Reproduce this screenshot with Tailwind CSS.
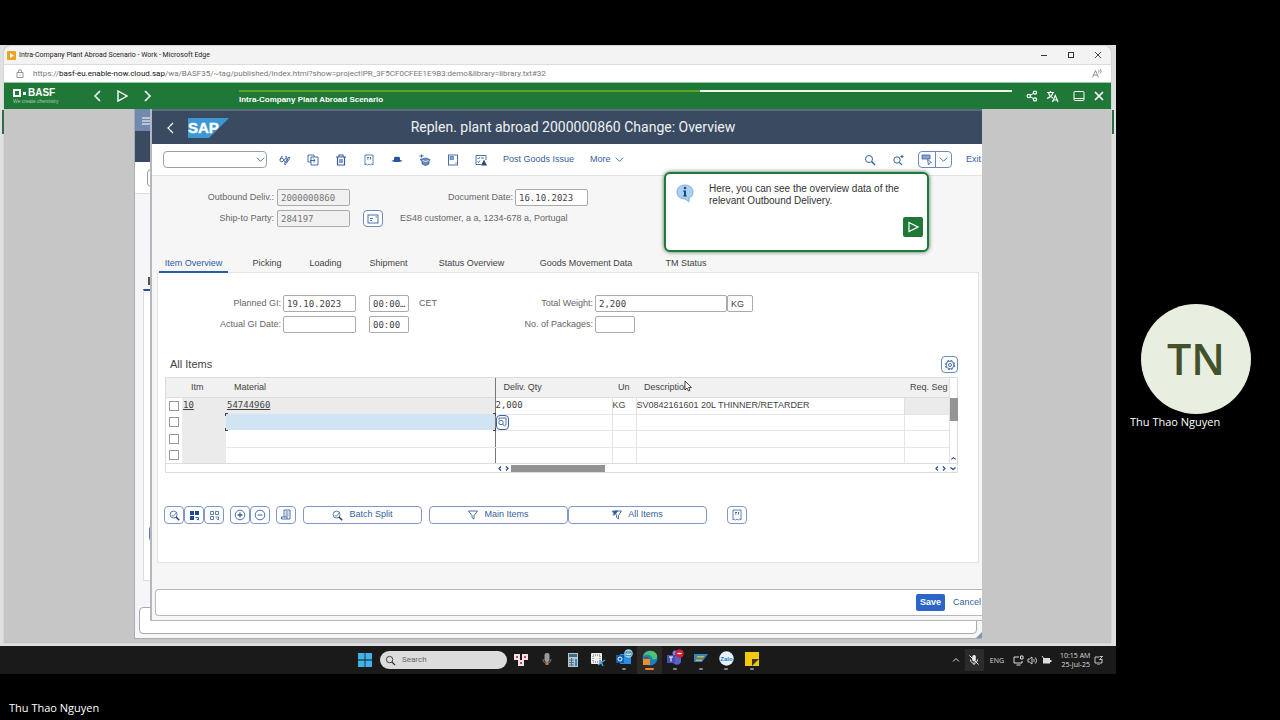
<!DOCTYPE html>
<html lang="en">
<head>
<meta charset="utf-8">
<meta name="viewport" content="width=device-width, initial-scale=1">
<title>Intra-Company Plant Abroad Scenario</title>
<script src="https://cdn.jsdelivr.net/npm/@tailwindcss/browser@4"></script>
</head>
<body class="flex min-h-screen flex-col bg-black font-['Open_Sans','Noto_Sans',sans-serif]">

<svg class="hidden" aria-hidden="true">
  <symbol id="chev-down" viewBox="0 0 10 10"><path d="M1 3l4 4 4-4" fill="none" stroke="currentColor" stroke-width="1"/></symbol>
  <symbol id="zoom" viewBox="0 0 12 12"><circle cx="5" cy="5" r="3.500" fill="none" stroke="currentColor"/><path d="M7.600 7.600l3.400 3.400" stroke="currentColor" stroke-width="1.400"/></symbol>
  <symbol id="zoom-check" viewBox="0 0 12 12"><circle cx="5" cy="5" r="3.800" fill="none" stroke="currentColor" stroke-width=".9"/><path d="M3 5.500L4.500 7 8 3" fill="none" stroke="currentColor" stroke-width=".9"/><path d="M7.600 7.600l3.600 3.600" stroke="#223a66" stroke-width="1.600"/></symbol>
  <symbol id="note" viewBox="0 0 12 12"><path d="M2 1h8v10l-1.300-1-1.300 1-1.400-1-1.400 1-1.300-1L2 11z" fill="none" stroke="currentColor" stroke-width=".8"/><path d="M4 3.500h2M4 5h1.500M7.500 3v2.500" stroke="currentColor" stroke-width=".9"/></symbol>
</svg>

<div class="flex flex-1 pt-[45px]">
  <main class="flex min-w-0 flex-1 flex-col">

    <!-- Desktop with browser window -->
    <div class="flex bg-[#dfe1e0] pt-px pb-[3px]">
      <div class="w-1 shrink-0 pt-[64px]"><div class="ml-[2px] h-6 bg-[#2b6b3d]"></div></div>
      <section class="min-w-0 flex-1 overflow-hidden rounded-t-md bg-[#c6c6c6] shadow-[0_0_1px_#777]">
        <header class="flex h-[18px] items-center bg-[#f3f3f3] pr-[9px] pl-[3px]">
          <svg class="size-[9px]" viewBox="0 0 9 9"><rect width="9" height="9" rx="1" fill="#eda422"/><path d="M3 2l4 2.500-4 2.500z" fill="#fff"/></svg>
          <h1 class="ml-[3px] flex-1 font-[Roboto,sans-serif] text-[7px] text-[#222]">Intra-Company Plant Abroad Scenario - Work - Microsoft Edge</h1>
          <div class="flex gap-[19px] text-[#333]">
            <button aria-label="Minimize"><svg class="size-2" viewBox="0 0 8 8"><path d="M1 4.500h6" stroke="currentColor"/></svg></button>
            <button aria-label="Maximize"><svg class="size-2" viewBox="0 0 8 8"><rect x="1.500" y="1.500" width="5" height="5" fill="none" stroke="currentColor"/></svg></button>
            <button aria-label="Close window"><svg class="size-2" viewBox="0 0 8 8"><path d="M1 1l6 6M7 1L1 7" stroke="currentColor" stroke-width=".9"/></svg></button>
          </div>
        </header>
        <div class="flex h-[18px] items-center border-t border-[#dcdcdc] bg-white pr-[9px] pl-3 font-[Roboto,sans-serif] text-[8px] text-[#777]">
          <svg class="h-[9px] w-2" viewBox="0 0 8 9"><path d="M1 3.500h6v5H1zM2.500 3.500V2.200a1.500 1.500 0 013 0v1.300M4 5.500v1" fill="none" stroke="#888" stroke-width=".9"/></svg>
          <span class="ml-[9px] flex-1">https://<span class="text-[#111]">basf-eu.enable-now.cloud.sap</span>/wa/BASF35/~tag/published/index.html?show=project!PR_3F5CF0CFEE1E9B3:demo&amp;library=library.txt#32</span>
          <button aria-label="Read aloud"><svg class="h-[9px] w-[10px]" viewBox="0 0 10 9"><path d="M.500 8.500L3.500 1.500l3 7M1.500 6h4M6.500 1c.8.6.8 1.600 0 2.500M8 0c1.400 1.200 1.400 3 0 4.500" fill="none" stroke="#777" stroke-width=".8"/></svg></button>
        </div>

        <!-- Player bar -->
        <div class="flex h-[27px] border-t border-[#9cc7a6] bg-[#1f7838] pl-[9px] text-white">
          <div class="w-[43px] pt-[5px]">
            <div class="flex items-center gap-[2px] font-['Liberation_Sans',sans-serif] text-[10px] leading-[10px] font-bold">
              <span class="size-2 border-2 border-white"></span><span class="size-[3px] bg-white"></span><span>BASF</span>
            </div>
            <p class="font-['Liberation_Sans',sans-serif] text-[5px] leading-[7px] whitespace-nowrap text-[#a5cfb0]">We create chemistry</p>
          </div>
          <div class="flex w-[183px] items-center gap-[13px] pl-[35px]">
            <button aria-label="Previous"><svg class="h-3.5 w-3" viewBox="0 0 12 14"><path d="M9 2L4 7l5 5" fill="none" stroke="currentColor" stroke-width="1.600"/></svg></button>
            <button aria-label="Play"><svg class="h-3.5 w-3" viewBox="0 0 12 14"><path d="M2 2l9 5-9 5z" fill="none" stroke="currentColor" stroke-width="1.400"/></svg></button>
            <button aria-label="Next"><svg class="h-3.5 w-3" viewBox="0 0 12 14"><path d="M4 2l5 5-5 5" fill="none" stroke="currentColor" stroke-width="1.600"/></svg></button>
          </div>
          <div class="min-w-0 flex-1 pt-[7px]">
            <div class="flex h-[2px] bg-[#eef6ee]"><div class="bg-[#5aa522]" style="width:59.600%"></div></div>
            <h2 class="font-['Liberation_Sans',sans-serif] text-[8px] leading-4 font-bold">Intra-Company Plant Abroad Scenario</h2>
          </div>
          <div class="flex items-center pr-[7px] pl-[14px]">
            <button aria-label="Share"><svg class="size-3" viewBox="0 0 12 12"><path d="M3 6l6-3.500M3 6l6 3.500" stroke="currentColor"/><g fill="#1f7838" stroke="currentColor" stroke-width="1.200"><circle cx="2.800" cy="6" r="1.700"/><circle cx="9" cy="2.600" r="1.600"/><circle cx="9" cy="9.400" r="1.600"/></g></svg></button>
            <button aria-label="Language" class="ml-2"><svg class="size-[13px]" viewBox="0 0 13 13"><path d="M1 2.500h7M4.500 1v1.500M2.500 3C3 5.500 5 7 7 8M6.800 3C6 6 3.500 7.500 1 8.500M6.500 12L9.200 5.500 12 12M7.500 10h3.500" fill="none" stroke="currentColor" stroke-width="1.200"/></svg></button>
            <button aria-label="Layout" class="ml-[14px]"><svg class="size-3" viewBox="0 0 12 12"><rect x="1" y="1.500" width="10" height="9" rx="1" fill="none" stroke="currentColor"/><path d="M1 8.500h10" stroke="currentColor"/></svg></button>
            <button aria-label="Close" class="ml-[9px]"><svg class="size-[10px]" viewBox="0 0 10 10"><path d="M1 1l8 8M9 1L1 9" stroke="currentColor" stroke-width="1.700"/></svg></button>
          </div>
        </div>

        <!-- Demo stage -->
        <div class="mr-[129px] ml-[130px] pb-[4px]">
          <div class="relative h-[530px] overflow-hidden border-b border-l border-[#a9adb2] bg-[#f5f6f7]">
            <!-- Window behind -->
            <div class="flex h-full flex-col">
              <div class="h-[22px] bg-[#7189af] pt-2 pl-[7px]"><svg class="h-2 w-[9px]" viewBox="0 0 9 8"><path d="M0 1h9M0 4h9M0 7h9" stroke="#fff"/></svg></div>
              <div class="h-[31px] bg-[#3a4a60]"></div>
              <div class="h-[32px] border-b border-[#ddd] bg-white pt-[7px] pl-3"><div class="h-[18px] rounded-sm border border-[#999]"></div></div>
              <div class="mt-[83px] mb-1 ml-[13px] h-2 w-[2px] bg-[#555]"></div>
              <div class="ml-2 flex-1 border border-t-2 border-[#ddd] border-t-[#2a5699] bg-white pt-[234px] pl-[5px]"><div class="h-[17px] rounded-sm border border-[#5b7db5]"></div></div>
              <div class="mt-[26px] mr-[5px] mb-1 ml-1 h-[27px] rounded-sm border border-[#a5a9b0] bg-white"></div>
            </div>
            <svg class="absolute right-0 bottom-0 size-1.5" viewBox="0 0 6 6"><path d="M6 0v6H0z" fill="#7f93b5"/></svg>

            <!-- Front window -->
            <div class="absolute top-0 right-0 bottom-[17px] left-[15px] flex flex-col overflow-hidden border-b border-l-2 border-[#b4b8bd] bg-[#f6f6f6] font-['Liberation_Sans',sans-serif] text-[9px] text-[#666]">
              <div class="flex h-[35px] shrink-0 items-center border-t-2 border-[#5a6c80] bg-[#3a4a60] pl-[14px] text-white">
                <button aria-label="Back"><svg class="h-3 w-2" viewBox="0 0 8 12"><path d="M7 1L2 6l5 5" fill="none" stroke="currentColor" stroke-width="1.200"/></svg></button>
                <svg class="ml-[14px] h-5 w-[41px]" viewBox="0 0 41 20"><path d="M0 0h41L21 20H0z" fill="#3c97d3"/><text x="0" y="15" font-family="Liberation Sans" font-weight="700" font-size="15" fill="#fff" stroke="#fff" stroke-width=".4">SAP</text></svg>
                <h2 class="mr-[65px] flex-1 text-center font-[Roboto,sans-serif] text-[14px] whitespace-nowrap text-[#eef1f5]">Replen. plant abroad 2000000860 Change: Overview</h2>
              </div>

              <div class="flex h-[32px] shrink-0 items-center border-b border-[#e2e2e2] bg-white pl-[11px] text-[#35609f]">
                <div class="relative">
                  <select aria-label="Command" class="block h-[17px] w-[104px] appearance-none rounded-sm border border-[#9aa0a8] bg-white"><option></option></select>
                  <svg class="pointer-events-none absolute top-[4px] right-[2px] size-[9px]"><use href="#chev-down"/></svg>
                </div>
                <div class="ml-3 flex gap-4">
                  <button aria-label="Display or change"><svg class="size-3" viewBox="0 0 12 12"><g fill="none" stroke="currentColor" stroke-width=".9"><circle cx="2.800" cy="6" r="1.800"/><circle cx="7" cy="6.500" r="1.800"/><path d="M1 5.500L2.500 2.500l1.500.5M6 3l1.500-.5.500 2.500M6 11l5-7-1-1-4.500 6.500z"/></g></svg></button>
                  <button aria-label="Other delivery"><svg class="size-3" viewBox="0 0 12 12"><path d="M4 8H1V1h6v2M4 3h7v8H4zM3 6.500h5M6.300 4.700L8.200 6.500 6.300 8.300" fill="none" stroke="currentColor" stroke-width=".9"/></svg></button>
                  <button aria-label="Delete"><svg class="size-3" viewBox="0 0 12 12"><path d="M1 3h10M4 3V1h4v2M2.500 3v8h7V3M5 5v4M7 5v4" fill="none" stroke="currentColor" stroke-width="1.200"/></svg></button>
                  <button aria-label="Output"><svg class="size-3"><use href="#note"/></svg></button>
                  <button aria-label="Header details"><svg class="size-3" viewBox="0 0 12 12"><path d="M3 6V4.500C3 2.500 4.500 2.500 6 3c1.500-.5 3-.5 3 1.500V6l2.500.8C10 8.500 2 8.500.5 6.800z" fill="#2456a0"/></svg></button>
                  <button aria-label="Pack"><svg class="size-3" viewBox="0 0 12 12"><path d="M1 5.500L6.500 4 11 5.500 10 7v3l-3.500 1.500L3 10V7z" fill="#6a8cc0" stroke="currentColor" stroke-width=".8"/><path d="M3.500 6.500l3 1 3-1" fill="none" stroke="#fff" stroke-width=".8"/><path d="M.500 2h4M2.500.5v3" stroke="currentColor"/></svg></button>
                  <button aria-label="Document"><svg class="size-3" viewBox="0 0 12 12"><rect x="1.500" y="1" width="9" height="10" fill="none" stroke="currentColor" stroke-width=".9"/><path d="M3 2.500h3.500v3H3zM8 9h2" fill="#8aa5cd" stroke="currentColor" stroke-width=".6"/></svg></button>
                  <button aria-label="Incompletion log"><svg class="size-3" viewBox="0 0 12 12"><path d="M6 10.500H1V1.500h10V6M2.500 4l1 1 1.500-2M6 4h3M2.500 7.500l1 1 1.500-2" fill="none" stroke="currentColor" stroke-width=".9"/><path d="M9 5.500L12 11.500H6z" fill="#2b4a80"/></svg></button>
                </div>
                <button class="ml-4">Post Goods Issue</button>
                <button class="ml-4 flex items-center gap-[4px]">More <svg class="size-[9px]"><use href="#chev-down"/></svg></button>
                <div class="ml-auto flex items-center">
                  <button aria-label="Search"><svg class="size-3"><use href="#zoom"/></svg></button>
                  <button aria-label="Search next" class="ml-4"><svg class="size-3" viewBox="0 0 12 12"><circle cx="5" cy="6" r="3.200" fill="none" stroke="currentColor"/><path d="M7.300 8.300l2.700 2.700M8.500 2.500h3M10 1v3" stroke="currentColor" stroke-width="1.100"/></svg></button>
                  <div class="ml-[14px] flex h-[17px] rounded-sm border border-[#6a8ac0]">
                    <button aria-label="Layout menu" class="flex w-[17px] items-center justify-center border-r border-[#6a8ac0]"><svg class="size-3" viewBox="0 0 12 12"><path d="M1 1h8v4H1z" fill="#8aa5d5" stroke="currentColor" stroke-width=".8"/><path d="M6.500 5.500l4 3-2 .5-1 2z" fill="#fff" stroke="currentColor" stroke-width=".8"/></svg></button>
                    <button aria-label="Open layout menu" class="flex w-[15px] items-center justify-center"><svg class="size-[9px]"><use href="#chev-down"/></svg></button>
                  </div>
                  <button class="ml-[14px] w-4 text-left">Exit</button>
                </div>
              </div>

              <!-- Header fields -->
              <div class="flex h-[81px] shrink-0 flex-col gap-1 pt-[13px]">
                <div class="flex items-center">
                  <label for="outb" class="w-[122px] text-right">Outbound Deliv.:</label>
                  <input id="outb" readonly value="2000000860" class="ml-[3px] h-[17px] w-[73px] rounded-xs border border-[#aaa] bg-[#f1f1f1] px-[3px] font-['DejaVu_Sans_Mono',monospace] text-[9px] text-[#777]">
                  <label for="docd" class="ml-[90px] w-[73px] text-right">Document Date:</label>
                  <input id="docd" value="16.10.2023" class="ml-[2px] h-[17px] w-[73px] rounded-xs border border-[#aaa] bg-white px-[3px] font-['DejaVu_Sans_Mono',monospace] text-[9px] text-[#444]">
                </div>
                <div class="flex items-center">
                  <label for="ship" class="w-[122px] text-right">Ship-to Party:</label>
                  <input id="ship" readonly value="284197" class="ml-[3px] h-[17px] w-[73px] rounded-xs border border-[#aaa] bg-[#f1f1f1] px-[3px] font-['DejaVu_Sans_Mono',monospace] text-[9px] text-[#777]">
                  <button aria-label="Partner details" class="ml-[13px] flex h-[17px] w-5 items-center justify-center rounded-sm border border-[#6a8ac0] bg-white text-[#35609f]"><svg class="h-2.5 w-3" viewBox="0 0 12 10"><rect x="1" y="1" width="10" height="8" fill="none" stroke="currentColor" stroke-width=".9"/><path d="M3 4.500h3M3 6.500h2M8.500 3h1.500" stroke="currentColor" stroke-width=".9"/></svg></button>
                  <span class="ml-[17px]">ES48 customer, a a, 1234-678 a, Portugal</span>
                </div>
              </div>

              <!-- Tabs -->
              <nav class="flex h-[15px] shrink-0 items-start pl-[7px] leading-[12px] text-[#444]" role="tablist">
                <button role="tab" aria-selected="true" class="relative z-10 h-4 w-[69px] border-b-2 border-[#2a5ca8] pb-[2px] whitespace-nowrap text-[#2a5ca8]">Item Overview</button>
                <button role="tab" class="ml-6 w-[30px]">Picking</button>
                <button role="tab" class="ml-[27px] w-[33px]">Loading</button>
                <button role="tab" class="ml-[27px] w-[39px]">Shipment</button>
                <button role="tab" class="ml-[30px] w-[67px] whitespace-nowrap">Status Overview</button>
                <button role="tab" class="ml-[33px] w-[96px] whitespace-nowrap">Goods Movement Data</button>
                <button role="tab" class="ml-[31px] w-[42px] whitespace-nowrap">TM Status</button>
              </nav>

              <section class="mr-[3px] ml-[5px] h-[291px] shrink-0 border border-[#e3e3e3] bg-white">
                <div class="flex flex-col gap-1 pt-[22px]">
                  <div class="flex items-center">
                    <label for="pgi" class="w-[123px] text-right">Planned GI:</label>
                    <input id="pgi" value="19.10.2023" class="ml-[2px] h-[17px] w-[73px] rounded-xs border border-[#aaa] px-[3px] font-['DejaVu_Sans_Mono',monospace] text-[9px] text-[#444]">
                    <input aria-label="Planned GI time" value="00:00…" class="ml-[13px] h-[17px] w-10 rounded-xs border border-[#aaa] pl-[3px] font-['DejaVu_Sans_Mono',monospace] text-[9px] text-[#444]">
                    <span class="ml-[10px] w-[48px]">CET</span>
                    <label for="tw" class="w-[126px] text-right">Total Weight:</label>
                    <input id="tw" value="2,200" class="ml-[2px] h-[17px] w-[132px] rounded-xs border border-[#aaa] px-[3px] font-['DejaVu_Sans_Mono',monospace] text-[9px] text-[#444]">
                    <input aria-label="Weight unit" value="KG" class="h-[17px] w-[26px] rounded-xs border border-[#aaa] px-[3px] text-[9px] text-[#444]">
                  </div>
                  <div class="flex items-center">
                    <label for="agi" class="w-[123px] text-right">Actual GI Date:</label>
                    <input id="agi" class="ml-[2px] h-[17px] w-[73px] rounded-xs border border-[#aaa]">
                    <input aria-label="Actual GI time" value="00:00" class="ml-[13px] h-[17px] w-10 rounded-xs border border-[#aaa] px-[3px] font-['DejaVu_Sans_Mono',monospace] text-[9px] text-[#444]">
                    <label for="nop" class="ml-[58px] w-[126px] text-right">No. of Packages:</label>
                    <input id="nop" class="ml-[2px] h-[17px] w-10 rounded-xs border border-[#aaa]">
                  </div>
                </div>

                <div class="mt-[23px] flex h-[17px] items-center justify-between pr-5 pl-3 text-[#444]">
                  <h3 class="text-[11px]">All Items</h3>
                  <button aria-label="Settings" class="flex size-[17px] items-center justify-center rounded-sm border border-[#6a8ac0] text-[#35609f]"><svg class="size-3" viewBox="0 0 12 12"><circle cx="6" cy="6" r="4.600" fill="none" stroke="currentColor" stroke-width="1" stroke-dasharray="2.200 1.410"/><circle cx="6" cy="6" r="3.800" fill="none" stroke="currentColor" stroke-width=".8"/><circle cx="6" cy="6" r="1.500" fill="none" stroke="currentColor" stroke-width=".9"/></svg></button>
                </div>

                <div class="mt-[4px] mr-5 ml-[7px] border border-[#dcdcdc]">
                  <div class="flex">
                    <table class="min-w-0 flex-1 table-fixed border-collapse text-left text-[#444]">
                      <colgroup><col class="w-4"><col class="w-[44px]"><col class="w-[269px]"><col class="w-[117px]"><col class="w-6"><col><col class="w-[45px]"></colgroup>
                      <thead>
                        <tr class="h-[19px] border-b border-[#dcdcdc] bg-[#f1f1f1]">
                          <th class="p-0"></th><th class="p-0 pl-[9px] font-normal">Itm</th><th class="border-r border-r-[#777] p-0 pl-2 font-normal">Material</th><th class="p-0 pl-2 font-normal">Deliv. Qty</th><th class="p-0 pl-[6px] font-normal">Un</th><th class="p-0 pl-2 font-normal">Description</th><th class="overflow-hidden p-0 pl-[6px] font-normal whitespace-nowrap">Req. Seg</th>
                        </tr>
                      </thead>
                      <tbody>
                        <tr class="h-[17px]">
                          <td class="p-0"><input type="checkbox" aria-label="Select item 10" class="mx-auto block size-[10px] appearance-none border border-[#999] bg-white"></td>
                          <td class="bg-[#ebebeb] p-0 pl-px"><a href="#" class="font-['DejaVu_Sans_Mono',monospace] text-[9px] underline">10</a></td>
                          <td class="border-r border-r-[#777] bg-[#ebebeb] p-0 pl-px"><a href="#" class="font-['DejaVu_Sans_Mono',monospace] text-[9px] underline">54744960</a></td>
                          <td class="border-r border-[#e0e0e0] p-0 font-['DejaVu_Sans_Mono',monospace] text-[9px]">2,000</td>
                          <td class="border-r border-[#e0e0e0] p-0">KG</td>
                          <td class="border-r border-[#e0e0e0] p-0 whitespace-nowrap">SV0842161601 20L THINNER/RETARDER</td>
                          <td class="bg-[#ebebeb] p-0"></td>
                        </tr>
                        <tr class="h-[16px]">
                          <td class="p-0"><input type="checkbox" aria-label="Select row 2" class="mx-auto block size-[10px] appearance-none border border-[#999] bg-white"></td>
                          <td class="bg-[#ebebeb] p-0"></td>
                          <td class="relative border-r border-r-[#777] bg-[#d1e4f4] p-0">
                            <span class="absolute -top-px -left-px size-[3px] border-t border-l border-[#444]"></span><span class="absolute -bottom-px -left-px size-[3px] border-b border-l border-[#444]"></span><span class="absolute -top-px -right-px size-[3px] border-t border-r border-[#444]"></span><span class="absolute -right-px -bottom-px size-[3px] border-r border-b border-[#444]"></span>
                          </td>
                          <td class="border border-l-0 border-[#e6e6e6] p-0"><button aria-label="Value help" class="flex h-[15px] w-[13px] items-center justify-center rounded-sm border border-[#35609f] bg-white text-[#35609f]"><svg class="size-2.5" viewBox="0 0 10 10"><path d="M2 3V1h7v7H8" fill="none" stroke="currentColor" stroke-width=".9"/><circle cx="4" cy="5.500" r="2.200" fill="none" stroke="currentColor" stroke-width=".9"/><path d="M5.500 7l2.500 2.500" stroke="currentColor"/></svg></button></td>
                          <td class="border border-[#e6e6e6] p-0"></td><td class="border border-[#e6e6e6] p-0"></td><td class="border-y border-[#e6e6e6] p-0"></td>
                        </tr>
                        <tr class="h-[17px]">
                          <td class="p-0"><input type="checkbox" aria-label="Select row 3" class="mx-auto block size-[10px] appearance-none border border-[#999] bg-white"></td>
                          <td class="bg-[#ebebeb] p-0"></td><td class="border-r border-b border-[#e6e6e6] border-r-[#777] p-0"></td>
                          <td class="border-r border-b border-[#e6e6e6] p-0"></td><td class="border border-[#e6e6e6] p-0"></td><td class="border border-[#e6e6e6] p-0"></td><td class="border-b border-[#e6e6e6] p-0"></td>
                        </tr>
                        <tr class="h-[16px]">
                          <td class="p-0"><input type="checkbox" aria-label="Select row 4" class="mx-auto block size-[10px] appearance-none border border-[#999] bg-white"></td>
                          <td class="bg-[#ebebeb] p-0"></td><td class="border-r border-r-[#777] p-0"></td>
                          <td class="border-r border-[#e6e6e6] p-0"></td><td class="border-r border-[#e6e6e6] p-0"></td><td class="border-r border-[#e6e6e6] p-0"></td><td class="p-0"></td>
                        </tr>
                      </tbody>
                    </table>
                    <div class="flex w-2 flex-col items-center border-l border-[#e0e0e0]">
                      <div class="mt-5 h-[23px] w-2 bg-[#949494]"></div>
                      <svg class="mt-auto mb-px size-[7px] text-[#1f4a93]" viewBox="0 0 8 8"><path d="M1.500 5L4 3l2.500 2" fill="none" stroke="currentColor" stroke-width="1.300"/></svg>
                    </div>
                  </div>
                  <div class="flex h-[9px] items-center border-t border-[#dcdcdc] text-[#1f4a93]">
                    <svg class="ml-[331px] h-[7px] w-[14px]" viewBox="0 0 14 7"><path d="M4 1.500L2 3.500l2 2M9 1.500l2 2-2 2" fill="none" stroke="currentColor" stroke-width="1.200"/></svg>
                    <div class="h-[7px] w-[94px] bg-[#949494]"></div>
                    <svg class="ml-auto h-[7px] w-[24px]" viewBox="0 0 24 7"><path d="M5 1.500L3 3.500l2 2M10 1.500l2 2-2 2M17.500 2.500l2.500 2 2.500-2" fill="none" stroke="currentColor" stroke-width="1.200"/></svg>
                  </div>
                </div>

                <div class="mt-[33px] ml-[6px] flex text-[#35609f]">
                  <button aria-label="Details" class="flex h-[18px] w-5 items-center justify-center rounded-sm border border-[#7f99c4]"><svg class="size-[11px]"><use href="#zoom-check"/></svg></button>
                  <button aria-label="Select all" class="flex h-[18px] w-5 items-center justify-center rounded-sm border border-[#7f99c4]"><svg class="size-[11px]" viewBox="0 0 11 11"><path d="M1 1h4v4H1zM6 1h4v4H6zM1 6h4v4H1z" fill="#1f4a93"/><path d="M6.500 7.500h3v2.500l-2-1" fill="none" stroke="currentColor"/></svg></button>
                  <button aria-label="Deselect all" class="flex h-[18px] w-5 items-center justify-center rounded-sm border border-[#7f99c4]"><svg class="size-[11px]" viewBox="0 0 11 11"><path d="M1.500 1.500h3v3h-3zM6.500 1.500h3v3h-3zM1.500 6.500h3v3h-3zM6.500 7h3v3l-2-1.500" fill="none" stroke="currentColor" stroke-width=".8"/></svg></button>
                  <button aria-label="Create item" class="ml-[6px] flex h-[18px] w-5 items-center justify-center rounded-sm border border-[#7f99c4]"><svg class="size-3" viewBox="0 0 12 12"><circle cx="6" cy="6" r="4.800" fill="none" stroke="currentColor" stroke-width=".9"/><path d="M3.500 6h5M6 3.500v5" stroke="currentColor" stroke-width="1.300"/></svg></button>
                  <button aria-label="Delete item" class="flex h-[18px] w-5 items-center justify-center rounded-sm border border-[#7f99c4]"><svg class="size-3" viewBox="0 0 12 12"><circle cx="6" cy="6" r="4.800" fill="none" stroke="currentColor" stroke-width=".9"/><path d="M3.500 6h5" stroke="currentColor"/></svg></button>
                  <button aria-label="Print" class="ml-[6px] flex h-[18px] w-5 items-center justify-center rounded-sm border border-[#7f99c4]"><svg class="size-3" viewBox="0 0 12 12"><path d="M4 8V1h6v9H1.500V8H7v2M5.500 3h3M5.500 5h3M5.500 7h3" fill="none" stroke="currentColor" stroke-width=".9"/></svg></button>
                  <button class="ml-[7px] flex h-[18px] w-[119px] items-center justify-center gap-[6px] rounded-sm border border-[#7f99c4]"><svg class="size-[11px]"><use href="#zoom-check"/></svg>Batch Split</button>
                  <button class="ml-[7px] flex h-[18px] w-[139px] items-center justify-center gap-[6px] rounded-sm border border-[#7f99c4]"><svg class="size-[10px]" viewBox="0 0 10 10"><path d="M.5 1h9L6 5.500V9L4 7.500v-2z" fill="none" stroke="currentColor" stroke-width=".9"/></svg>Main Items</button>
                  <button class="flex h-[18px] w-[139px] items-center justify-center gap-[6px] rounded-sm border border-[#7f99c4]"><svg class="size-[10px]" viewBox="0 0 10 10"><path d="M3 1h6.500L6.500 5.500V9L4.500 7.500v-2z" fill="none" stroke="currentColor" stroke-width=".9"/><path d="M.5 1h5L2.500 5zM.5 5h2" fill="currentColor" stroke="currentColor" stroke-width=".8"/></svg>All Items</button>
                  <button aria-label="Item output" class="ml-5 flex h-[18px] w-5 items-center justify-center rounded-sm border border-[#7f99c4]"><svg class="size-3"><use href="#note"/></svg></button>
                </div>
              </section>

              <div class="mt-[26px] ml-[3px] flex h-[27px] shrink-0 items-center justify-end rounded-l-sm border border-r-0 border-[#b4b8bd] bg-white">
                <button class="h-[17px] w-[29px] rounded-xs bg-[#2b65c8] font-bold text-white">Save</button>
                <button class="ml-2 w-[29px] text-left whitespace-nowrap text-[#35609f]">Cancel</button>
              </div>
            </div>

            <!-- Callout -->
            <aside class="absolute top-[63px] right-[53px] flex h-[80px] w-[265px] rounded-md border-2 border-[#1d7a3a] bg-white pt-[8px] pr-[4px] pb-[13px] pl-[10px] shadow-[0_0_4px_#4a6a50]">
              <svg class="mt-[2px] h-[19px] w-[18px] shrink-0" viewBox="0 0 18 19"><path d="M9 1c5 0 8 3 8 7 0 3-1.500 5-4 6v4l-4-3C4 15 1 12 1 8s3-7 8-7z" fill="#a9d0f0" stroke="#6fa5d5" stroke-width=".8"/><circle cx="9" cy="4" r="1.300" fill="#1b4a80"/><path d="M7 6.500h3v5h1v1H7v-1h1v-4H7z" fill="#1b4a80"/></svg>
              <p class="ml-[15px] flex-1 pt-px font-['Liberation_Sans',sans-serif] text-[10px] leading-[12px] whitespace-nowrap text-[#333]">Here, you can see the overview data of the<br>relevant Outbound Delivery.</p>
              <button aria-label="Next step" class="flex size-5 items-center justify-center self-end rounded-xs bg-[#1f7838]"><svg class="size-3" viewBox="0 0 12 12"><path d="M2 1.500l9 4.500-9 4.500z" fill="none" stroke="#fff" stroke-width="1.200"/></svg></button>
            </aside>

            <svg class="absolute top-[271px] left-[549px] h-3 w-2" viewBox="0 0 8 12"><path d="M1 1v9l2-2 1.500 3 1.500-.700L4.700 7.500H7.500z" fill="#fff" stroke="#222" stroke-width=".8"/></svg>
          </div>
        </div>
      </section>
      <div class="w-[5px] shrink-0 pt-[64px]"><div class="mr-[2px] ml-px h-6 bg-[#2b6b3d]"></div></div>
    </div>

    <!-- Taskbar -->
    <footer class="flex h-[28px] items-center bg-[#1a1a1a] pr-3 pl-[358px] text-[#ddd]">
      <button aria-label="Start"><svg class="size-[14px]" viewBox="0 0 14 14"><path d="M0 0h6.600v6.600H0zM7.400 0H14v6.600H7.400zM0 7.400h6.600V14H0zM7.400 7.400H14V14H7.400z" fill="#3fb4ea"/></svg></button>
      <label class="ml-2 flex h-[18px] w-[127px] items-center gap-[6px] rounded-full bg-[#dcdcdc] pl-[5px]">
        <svg class="size-[11px] text-[#333]"><use href="#zoom"/></svg>
        <input aria-label="Search" placeholder="Search" class="w-20 bg-transparent font-[Roboto,sans-serif] text-[8px] placeholder:text-[#666]">
      </label>
      <div class="ml-px flex items-center">
        <button aria-label="Widgets" class="flex h-7 w-[26px] items-center justify-center"><svg class="size-4" viewBox="0 0 16 16"><path d="M1 2h6v6H1zM9 2h6v6H9zM5 8h6v6H5z" fill="#f1dfe4"/><path d="M3 4h2v2H3zM11 4h2v2h-2zM7 10h2v2H7z" fill="#c2476b"/></svg></button>
        <button aria-label="Recorder" class="flex h-7 w-[26px] items-center justify-center"><svg class="size-4" viewBox="0 0 16 16"><rect x="5.500" y="1" width="5" height="9" rx="2" fill="#999"/><path d="M4 7c0 6 8 6 8 0" fill="none" stroke="#777"/><path d="M6.500 10h3v3h-3z" fill="#c07040"/></svg></button>
        <button aria-label="Calculator" class="flex h-7 w-[25px] items-center justify-center"><svg class="size-4" viewBox="0 0 16 16"><rect x="3" y="1" width="10" height="14" fill="#b8c4cc"/><path d="M4 2h8v3H4z" fill="#376b8c"/><path d="M4 8h5M4 10.500h5M4 13h5M6.500 6v8" stroke="#55707f"/><path d="M10 7h2v7h-2z" fill="#2b8bd0"/></svg></button>
        <button aria-label="Snipping tool" class="flex h-7 w-[26px] items-center justify-center"><svg class="size-4" viewBox="0 0 16 16"><rect x="1" y="1" width="11" height="11" rx="1" fill="#eee"/><rect x="3" y="3" width="7" height="7" fill="none" stroke="#666" stroke-dasharray="1 1"/><path d="M8 13l7-5M10 8l3 6" stroke="#4aa0d5" stroke-width="1.500"/></svg></button>
        <button aria-label="Outlook" class="flex h-7 w-[26px] flex-col items-center justify-end gap-[2px] pb-1"><svg class="size-[17px]" viewBox="0 0 17 17"><path d="M4 5h11v10H4z" fill="#2a8fdb"/><rect y="6" width="8" height="8" fill="#0f5fae"/><circle cx="4" cy="10" r="2" fill="none" stroke="#fff"/><circle cx="12.500" cy="4.500" r="4.300" fill="#8fd4ef"/><path d="M10 3h5v3.500h-5zM10 3l2.500 2L15 3" fill="#fff" stroke="#1d6a8a" stroke-width=".7"/></svg><span class="h-[2px] w-1 rounded-full bg-[#888]"></span></button>
        <button aria-label="Edge" class="flex h-7 w-[25px] flex-col items-center justify-end gap-[2px] bg-[#2c2826] pb-1"><svg class="size-[16px]" viewBox="0 0 16 16"><circle cx="8" cy="8" r="7.500" fill="#1b7fc4"/><path d="M1 6C3 0 13-1 15 5c1 4-3 5-5 4 1-3-4-6-9-3z" fill="#4cc46a"/><path d="M1 9h7v6H1z" fill="#e6912d"/><path d="M3 9V7.500h3V9" fill="none" stroke="#7a4410"/></svg><span class="h-[2px] w-[9px] rounded-full bg-[#e8833a]"></span></button>
        <button aria-label="Teams" class="flex h-7 w-[26px] flex-col items-center justify-end gap-[2px] pb-1"><svg class="size-[17px]" viewBox="0 0 17 17"><circle cx="8" cy="4" r="2.500" fill="#7b83eb"/><path d="M5 7h9v5c0 5-8 5-9 0z" fill="#5a62c8"/><rect y="6" width="8" height="8" fill="#4550b5"/><path d="M2 8h4M4 8v4.500" stroke="#fff"/><circle cx="12.500" cy="4.500" r="4.300" fill="#cc2038"/><path d="M10.500 4.500h4" stroke="#fff" stroke-width="1.300"/></svg><span class="h-[2px] w-1 rounded-full bg-[#888]"></span></button>
        <button aria-label="SAP Logon" class="flex h-7 w-[25px] flex-col items-center justify-end gap-[2px] pb-1"><svg class="h-[14px] w-[14px]" viewBox="0 0 14 14"><path d="M0 2h14l-6 8H0z" fill="#3a84b5"/><path d="M3 4h7v1.500H3zM2 7.500h6V9H2z" fill="#d6b23c"/></svg><span class="h-[2px] w-1 rounded-full bg-[#888]"></span></button>
        <button aria-label="Zalo" class="flex h-7 w-[26px] flex-col items-center justify-end gap-[2px] pb-1"><svg class="size-[15px]" viewBox="0 0 15 15"><circle cx="7.500" cy="7.500" r="7.200" fill="#e8f2ff"/><text x="7.500" y="9.500" text-anchor="middle" font-family="Liberation Sans" font-weight="700" font-size="6" fill="#1c6fd8">Zalo</text></svg><span class="h-[2px] w-1 rounded-full bg-[#888]"></span></button>
        <button aria-label="Sticky notes" class="flex h-7 w-[25px] flex-col items-center justify-end gap-[2px] pb-1"><svg class="size-[14px]" viewBox="0 0 14 14"><path d="M0 0h14v14H0z" fill="#f2c811"/><path d="M7 14V7h7z" fill="#3a3520"/></svg><span class="h-[2px] w-1 rounded-full bg-[#888]"></span></button>
      </div>
      <div class="ml-auto flex items-center text-[7px] leading-[9px]">
        <button aria-label="Show hidden icons"><svg class="size-2" viewBox="0 0 8 8"><path d="M1 5.500L4 2.500l3 3" fill="none" stroke="currentColor"/></svg></button>
        <button aria-label="Microphone" class="ml-[5px] flex h-[22px] w-[19px] items-center justify-center bg-[#2b2b2b]"><svg class="size-3" viewBox="0 0 12 12"><rect x="4.300" y="1" width="3.500" height="6.500" rx="1.700" fill="#eee"/><path d="M2.500 5.500c0 5 7 5 7 0M6 9.500V11M1.500 1.500l9 9" fill="none" stroke="#eee"/></svg></button>
        <span class="ml-[6px]">ENG</span>
        <svg class="ml-[9px] size-[11px]" viewBox="0 0 11 11"><path d="M6 2H1v6h8V6M3.500 10h4M7.500 1h2.500v3H7.500z" fill="none" stroke="currentColor"/></svg>
        <svg class="ml-[3px] size-[11px]" viewBox="0 0 11 11"><path d="M1 4h1.500L5 2v7L2.500 7H1zM6.500 4c1 1 1 2 0 3M8.300 2.500c1.500 2 1.500 4 0 6" fill="none" stroke="currentColor" stroke-width=".9"/></svg>
        <svg class="ml-[3px] size-[11px]" viewBox="0 0 11 11"><path d="M2 3h7v5.500H2zM9 5h1.500v2H9z" fill="currentColor"/><path d="M1 1l3 4" stroke="currentColor"/></svg>
        <div class="ml-2 w-[30px] text-right whitespace-nowrap"><p>10:15 AM</p><p>25-Jul-25</p></div>
        <svg class="ml-1 size-[10px]" viewBox="0 0 10 10"><path d="M1 8V2h4M8 5v3H1M3 10h3M5.500 1.500h3l-3 3h3" fill="none" stroke="currentColor" stroke-width=".9"/></svg>
      </div>
    </footer>
  </main>

  <!-- Participant -->
  <aside class="w-[164px] shrink-0 pt-[259px] pl-[14px] text-white">
    <div class="ml-[11px] flex size-[110px] items-center justify-center rounded-full bg-[#e8efe0] text-[43px] font-semibold text-[#43502c]">TN</div>
    <p class="text-[11px] leading-[15px]">Thu Thao Nguyen</p>
  </aside>
</div>

<p class="px-[9px] pb-1 text-[11px] leading-4 text-white">Thu Thao Nguyen</p>
</body>
</html>
